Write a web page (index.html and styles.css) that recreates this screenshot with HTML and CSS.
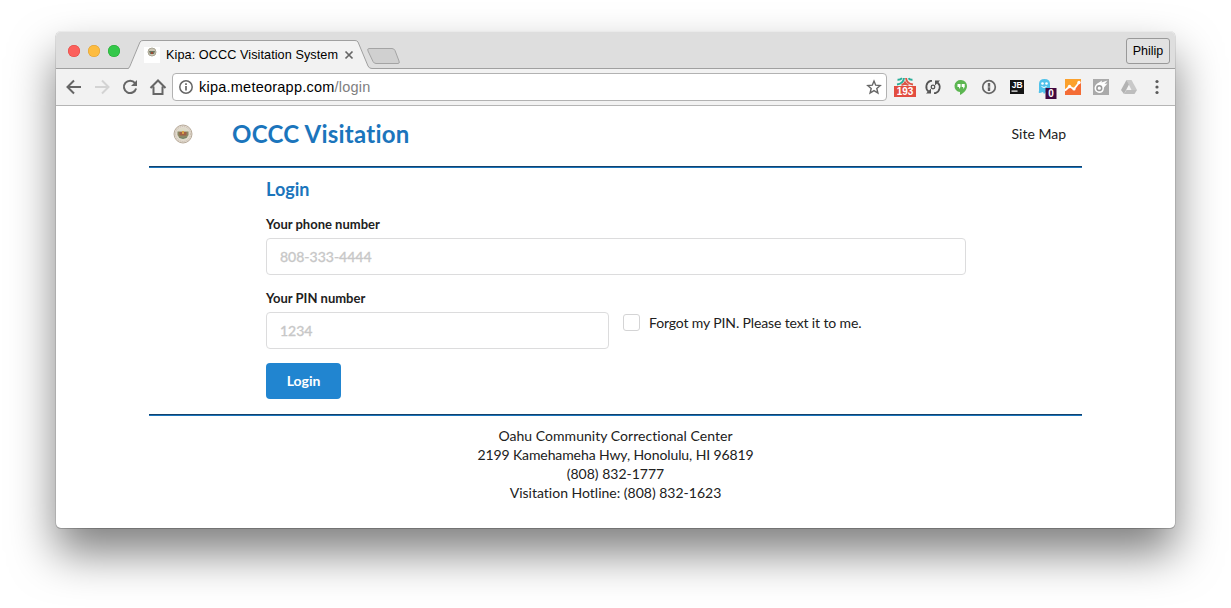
FILE: index.html
```html
<!DOCTYPE html>
<html lang="en">
<head>
<meta charset="utf-8">
<title>Kipa: OCCC Visitation System</title>
<link rel="stylesheet" href="styles.css">
</head>
<body>
<div class="window">
  <div class="tabstrip">
    <div class="lights"><i class="red"></i><i class="yellow"></i><i class="green"></i></div>
    <div class="tab">
      <svg class="tab-shape" width="244" height="38" viewBox="0 0 244 38"><path d="M0 37.5H.5L12 11Q13 9.500 15 9.500H227Q229 9.500 230 11L240 35Q241 37.500 244 37.500V38H0Z" fill="#f2f2f2"/><path d="M-2 37.500H0Q1 37.500 2 35L12 11Q13 9.500 15 9.500H227Q229 9.500 230 11L240 35Q241 37.500 244 37.500" fill="none" stroke="#a0a0a0"/></svg>
      <svg class="favicon" width="16" height="16" viewBox="0 0 16 16"><path fill="#fff" d="M0 0h16v16H0z"/><circle cx="8" cy="5" r="4" fill="#cbc6b5" stroke="#aaa695"/><path d="M5 4h6L10 7H6Z" fill="#6c7560"/><path d="M7 5h2v2H7z" fill="#9a4b35"/></svg>
      <span class="tab-title">Kipa: OCCC Visitation System</span>
      <svg class="close" width="10" height="10" viewBox="0 0 10 10"><path d="M1.500 1.500l7 7M8.500 1.500l-7 7" stroke="#666" stroke-width="1.700"/></svg>
    </div>
    <svg class="newtab" width="36" height="18" viewBox="0 0 36 18"><path d="M3 .5H26Q28 .5 29 2.500L33 13Q34 15.500 32 15.500H10Q8 15.500 7 13.500L2 3Q1 .5 3 .5Z" fill="#d0d0d0" stroke="#a4a4a4"/></svg>
    <div class="profile">Philip</div>
  </div>
  <div class="toolbar">
    <svg class="nav" width="16" height="16" viewBox="0 0 16 16" fill="none" stroke="#666" stroke-width="2"><path d="M15 8H2M8 1.500L1.500 8L8 14.500"/></svg>
    <svg class="nav" width="16" height="16" viewBox="0 0 16 16" fill="none" stroke="#d3d3d3" stroke-width="2"><path d="M1 8h13M8 1.500L14.500 8L8 14.500"/></svg>
    <svg class="nav" width="16" height="16" viewBox="0 0 16 16"><path d="M13 4A6.200 6.200 0 1 0 14.100 9.500" fill="none" stroke="#666" stroke-width="2"/><path d="M15 1v6H9Z" fill="#666"/></svg>
    <svg class="nav" width="18" height="16" viewBox="0 0 18 16" fill="none" stroke="#666" stroke-width="2"><path d="M1.500 9L9 1.500L16.500 9M4.500 7.500V15h9V7.500"/></svg>
    <div class="omnibox">
      <svg class="info" width="14" height="14" viewBox="0 0 14 14"><circle cx="7" cy="7" r="6.200" fill="none" stroke="#666" stroke-width="1.500"/><path d="M7 6v4.500M7 3.300v1.600" stroke="#666" stroke-width="1.700"/></svg>
      <span class="url">kipa.meteorapp.com<span class="path">/login</span></span>
      <svg class="star" width="16" height="16" viewBox="0 0 16 16"><path d="M8 2L9.700 6.200L14.200 6.600L10.800 9.500L11.900 14L8 11.600L4.100 14L5.200 9.500L1.800 6.600L6.300 6.200Z" fill="none" stroke="#666" stroke-width="1.400"/></svg>
    </div>
    <div class="extensions">
      <svg viewBox="0 0 24 22"><g fill="none" stroke-width="1.900"><path d="M4.500 3.800Q7.500 4 9 2.200" stroke="#2aae99"/><path d="M4 8.500Q10.500 7.500 11 2" stroke="#2aae99"/><path d="M13 2Q13.500 7.500 20 8.500" stroke="#dc5647"/><path d="M15.500 2.200Q16.500 4 19.500 3.800" stroke="#2aae99"/><path d="M8.500 9Q11 8.500 12 6.500Q13 8.500 15.500 9" stroke="#dc5647"/></g><path fill="#e24d40" d="M1 10h22v11H1z"/><text x="12" y="19" text-anchor="middle" class="badge">193</text></svg>
      <svg viewBox="0 0 24 22"><g fill="none" stroke="#555" stroke-width="1.800"><path d="M11 4.800H9.500A6.300 6.300 0 0 0 7.500 15.500M13 17.200H14.500A6.300 6.300 0 0 0 16.500 6.500"/><circle cx="12" cy="11" r="1.800" stroke-width="1.300"/></g><path fill="#555" d="M5 17.500H10V12.500ZM19 4.500H14V9.500Z"/></svg>
      <svg viewBox="0 0 24 22"><path d="M12 4a6 6 0 0 0-1 12v3c4-2 7-5 7-9a6 6 0 0 0-6-6Z" fill="#5cb651"/><path d="M8.500 8h3V11L10 13V11H8.500ZM12.700 8h3V11L14.200 13V11h-1.500Z" fill="#fff"/></svg>
      <svg viewBox="0 0 24 22"><circle cx="12" cy="11" r="6.300" fill="#f4f4f4" stroke="#666" stroke-width="1.700"/><path d="M12 7v8" stroke="#666" stroke-width="2.400"/><path d="M12 10v2" stroke="#aaa"/></svg>
      <svg viewBox="0 0 24 22"><path fill="#151515" d="M5 4h14v14H5z"/><text x="12.200" y="11.500" text-anchor="middle" class="jb">JB</text><path fill="#fff" d="M6.500 14.500h6v1.200h-6z"/></svg>
      <svg viewBox="0 0 24 22"><path d="M7 17q-2 0-1-2V8q0-5 5.500-5t5.500 5v6q0 2 1 3l-3 .5-2-1.500-2 2-1-2Z" fill="#50c2ea"/><circle cx="9.500" cy="7.500" r="1.300" fill="#fff"/><circle cx="13.500" cy="7.500" r="1.300" fill="#fff"/><path d="M8.500 10.500q2.500 2 5 0" stroke="#fff" fill="none"/><path fill="#3f083f" d="M12.500 12h11v11h-11z"/><text x="18" y="21" text-anchor="middle" class="badge">0</text></svg>
      <svg viewBox="0 0 24 22"><path fill="#fba12d" d="M4 3h16v16H4z"/><path fill="#f46c35" d="M4 15L9 10L13 13L20 5V19H4Z"/><path d="M4 14.500L8.500 10.500L13 13L18.500 6" fill="none" stroke="#fff" stroke-width="1.800"/><g fill="#fff"><circle cx="8.500" cy="10.500" r="1.700"/><circle cx="13" cy="13" r="1.600"/><circle cx="18" cy="6.500" r="1.700"/></g></svg>
      <svg viewBox="0 0 24 22"><path fill="#aaa" d="M4 3h16v16H4z"/><path fill="#fff" d="M5.500 12Q6 8 10 6.500L13 4.500L12.500 6.500L18.500 4.500L15.500 8L18.500 7.500L15 11.500Q15 17 10 17Q5.500 16 5.500 12Z"/><circle cx="10.300" cy="12.200" r="2.400" fill="none" stroke="#999" stroke-width="1.500"/></svg>
      <svg viewBox="0 0 24 22"><path fill="#c9c9c9" d="M9.500 4h5L20 14h-5.500Z"/><path fill="#b3b3b3" d="M9.500 4L12 8.500L7 18L4 14Z"/><path fill="#bdbdbd" d="M9.500 14H20L17.500 18H7Z"/></svg>
      <svg viewBox="0 0 24 22" fill="#5a5a5a"><circle cx="12" cy="5.500" r="1.600"/><circle cx="12" cy="11" r="1.600"/><circle cx="12" cy="16.500" r="1.600"/></svg>
    </div>
  </div>
  <div class="page">
    <header class="header">
      <svg class="seal" width="20" height="20" viewBox="0 0 20 20"><circle cx="10" cy="10" r="9" fill="#e3dbd0" stroke="#b8ab9b"/><circle cx="10" cy="10" r="7.500" fill="none" stroke="#c4b9aa" stroke-dasharray="1 1"/><circle cx="10" cy="10" r="6" fill="#dedbc8"/><path d="M4.500 7.500h11v3.500l-2 3h-7l-2-3Z" fill="#8b8967"/><path d="M6.500 8h7v3.500h-7z" fill="#a26047"/><path d="M9 7h2v3H9z" fill="#d8a346"/><path d="M6.500 13.500q3.500 2 7 0" stroke="#6b8068" fill="none"/></svg>
      <h1>OCCC Visitation</h1>
      <a class="sitemap">Site Map</a>
    </header>
    <main class="login">
      <h2>Login</h2>
      <label for="phone">Your phone number</label>
      <input id="phone" class="field" placeholder="808-333-4444">
      <label for="pin" class="pin-label">Your PIN number</label>
      <div class="pin-row">
        <input id="pin" class="field pin" placeholder="1234">
        <div class="forgot"><span class="checkbox"></span><span class="forgot-text">Forgot my PIN. Please text it to me.</span></div>
      </div>
      <button class="submit">Login</button>
    </main>
    <footer class="footer">
      <div class="facility">Oahu Community Correctional Center</div>
      <div class="address">2199 Kamehameha Hwy, Honolulu, HI 96819</div>
      <div>(808) 832-1777</div>
      <div>Visitation Hotline: (808) 832-1623</div>
    </footer>
  </div>
</div>
</body>
</html>
```
FILE: styles.css
```css
* { box-sizing: border-box; }
body { margin: 0; height: 608px; overflow: hidden; padding: 31px 56px 0; background: #fff; font: 14px/19px Lato, sans-serif; font-variant-ligatures: none; color: #212121; }
svg { display: block; flex: none; }
.window { width: 1119px; height: 497px; border-radius: 5px; background: #fff; box-shadow: 0 .5px 0 .5px rgba(0,0,0,.2), 0 25px 45px rgba(0,0,0,.5); }
.tabstrip { height: 38px; display: flex; background: #dedede; border-radius: 5px 5px 0 0; box-shadow: inset 0 -1px #a0a0a0, inset 0 1px #eaeaea; font-family: "Liberation Sans", sans-serif; color: #000; }
.lights { display: flex; gap: 8px; padding: 14px 0 0 12px; width: 72px; }
.lights i { width: 12px; height: 12px; border-radius: 50%; flex: none; }
.red { background: #fc605c; box-shadow: inset 0 0 0 .5px #e04640; }
.yellow { background: #fdbc40; box-shadow: inset 0 0 0 .5px #dc9e33; }
.green { background: #34c84a; box-shadow: inset 0 0 0 .5px #24a732; }
.tab { position: relative; width: 238px; height: 38px; display: flex; align-items: flex-start; padding: 16px 0 0 16px; }
.tab-shape { position: absolute; left: 0; top: 0; }
.favicon { position: relative; }
.tab-title { position: relative; margin-left: 6px; width: 172px; font-size: 12.700px; letter-spacing: .06px; line-height: 16px; white-space: nowrap; }
.close { position: relative; margin: 3px 0 0 6px; }
.newtab { margin: 17px 0 0; }
.profile { margin: 7px 5px 0 auto; width: 44px; height: 26px; border: 1px solid #999; border-radius: 3px; background: #e2e2e2; text-align: center; font-size: 12.500px; line-height: 25px; }
.toolbar { height: 37px; display: flex; align-items: center; background: #f2f2f2; border-bottom: 1px solid #b5b5b5; padding-left: 10px; font-family: "Liberation Sans", sans-serif; }
.nav { margin-right: 12px; }
.nav:nth-child(3) { margin-right: 11px; }
.nav:nth-child(4) { margin-right: 5px; }
.omnibox { width: 715px; height: 28px; display: flex; align-items: center; background: #fff; border: 1px solid #b2b2b2; border-radius: 4px; padding: 0 4px 0 6px; }
.url { margin-left: 6px; font-size: 14.500px; letter-spacing: .23px; color: #000; white-space: nowrap; }
.path { color: #808080; }
.star { margin-left: auto; }
.extensions { display: flex; gap: 4px; margin-left: 6px; }
.extensions svg { width: 24px; height: 22px; overflow: visible; }
.badge { font: bold 10px "Liberation Sans", sans-serif; fill: #fff; }
.jb { font: bold 8.500px "Liberation Sans", sans-serif; fill: #fff; }
.page { width: 933px; margin-left: 93px; }
.header { height: 62px; display: flex; align-items: center; padding: 0 16px 6px 24px; border-bottom: 1px solid #1b75bc; box-shadow: inset 0 -1px #14426b; }
h1 { margin: 0 0 0 39px; font-size: 24px; letter-spacing: .25px; line-height: 30px; color: #1b75bc; }
.sitemap { margin-left: auto; }
.login { height: 248px; padding: 11px 116px 0 117px; border-bottom: 1px solid #1b75bc; box-shadow: inset 0 -1px #14426b; }
h2 { margin: 0 0 15px; font-size: 18px; line-height: 21px; color: #1b75bc; }
label { display: block; height: 23px; font-size: 13px; line-height: 18px; font-weight: bold; }
.field { display: block; width: 700px; height: 37px; border: 1px solid #dcdcdd; border-radius: 4px; padding: 0 13px; font: 14px Lato, sans-serif; outline: 0; }
.field::placeholder { color: #c7c7c7; opacity: 1; -webkit-text-stroke: .35px #c7c7c7; }
.pin-label { margin-top: 14px; }
.pin-row { display: flex; gap: 14px; }
.pin { width: 343px; }
.forgot { display: flex; gap: 9px; padding-top: 2px; }
.forgot-text { margin-top: -1px; letter-spacing: -.13px; }
.checkbox { width: 17px; height: 17px; border: 1px solid #d4d4d5; border-radius: 3px; }
.submit { display: block; width: 75px; height: 36px; margin-top: 14px; padding: 0 0 2px; border: 0; border-radius: 4px; background: #2185d0; color: #fff; font: bold 14px Lato, sans-serif; }
.footer { padding-top: 10px; text-align: center; }
.facility { letter-spacing: .04px; }
.address { letter-spacing: -.1px; }
```
